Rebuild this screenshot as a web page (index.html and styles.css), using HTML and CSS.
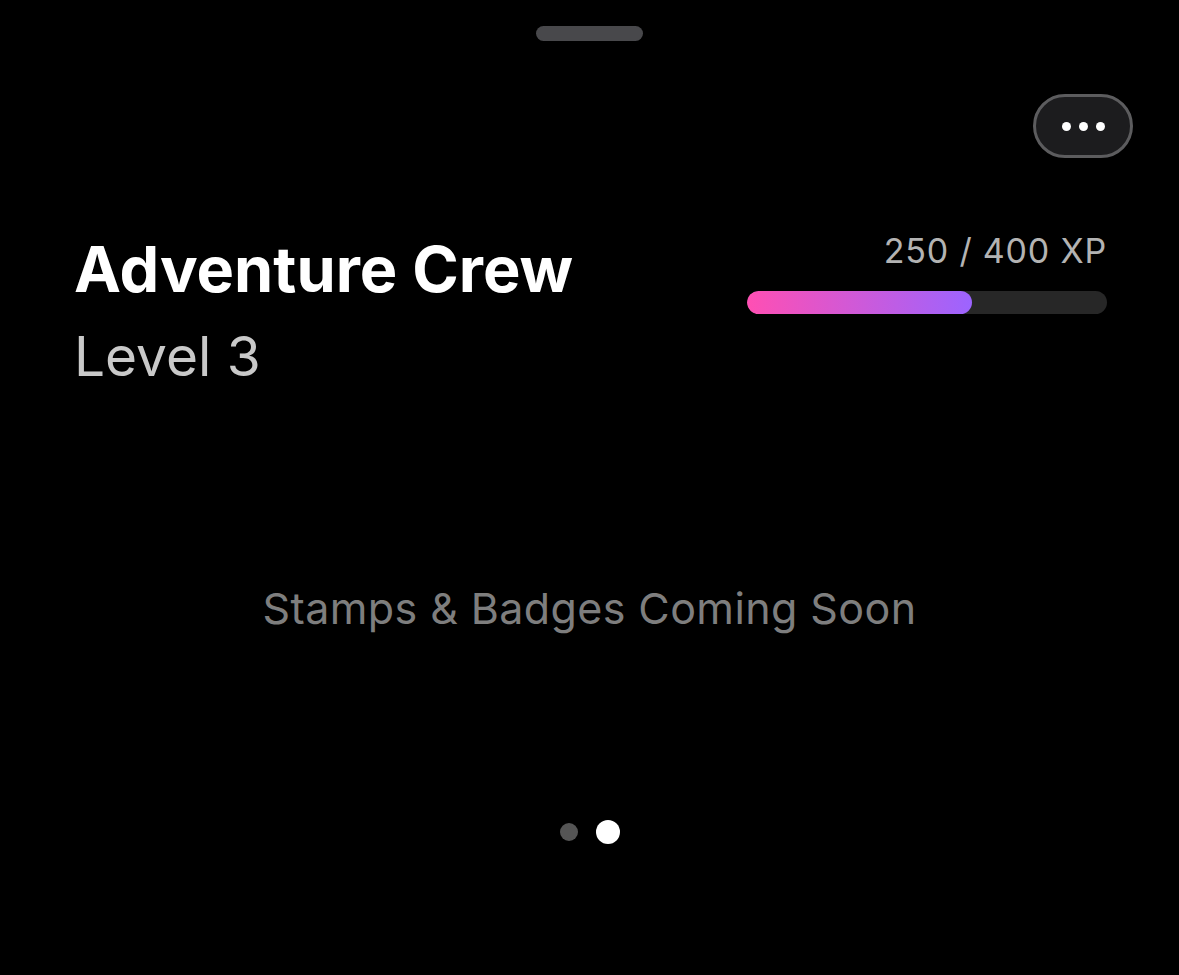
FILE: index.html
```html
<!DOCTYPE html>
<html lang="en">
<head>
    <meta charset="UTF-8">
    <meta name="viewport" content="width=device-width, initial-scale=1.0">
    <title>Adventure Crew</title>
    <link rel="stylesheet" href="styles.css">
</head>
<body>
    <div class="sheet">
        <div class="handle"></div>

        <div class="topbar">
            <button class="menu-btn" aria-label="More">
                <span class="dot"></span>
                <span class="dot"></span>
                <span class="dot"></span>
            </button>
        </div>

        <section class="crew-header">
            <div class="crew-info">
                <h1>Adventure Crew</h1>
                <p class="level">Level 3</p>
            </div>
            <div class="xp-block">
                <p class="xp-label">250 / 400 XP</p>
                <div class="xp-bar">
                    <span class="xp-fill" style="width: 62.5%;"></span>
                </div>
            </div>
        </section>

        <p class="coming-soon">Stamps &amp; Badges Coming Soon</p>

        <div class="pager">
            <span class="pager-dot"></span>
            <span class="pager-dot active"></span>
        </div>
    </div>
</body>
</html>
```

FILE: styles.css
```css
/* General */
body {
    margin: 0;
    padding: 0;
    background-color: #000;
    color: #fff;
    font-family: 'Inter', 'Liberation Sans', sans-serif;
}

.sheet {
    display: flex;
    flex-direction: column;
    min-height: 975px;
}

.handle {
    width: 107px;
    height: 15px;
    border-radius: 8px;
    background-color: #48484b;
    margin: 26px auto 0;
}

/* Menu button */
.topbar {
    display: flex;
    justify-content: flex-end;
    padding: 53px 46px 0 0;
}

.menu-btn {
    width: 100px;
    height: 64px;
    box-sizing: border-box;
    border: 3px solid #5c5c5e;
    border-radius: 32px;
    background-color: #1c1c1e;
    display: flex;
    align-items: center;
    justify-content: center;
    gap: 8px;
    padding: 0;
    cursor: pointer;
}

.menu-btn .dot {
    width: 9px;
    height: 9px;
    border-radius: 50%;
    background-color: #fff;
}

/* Header */
.crew-header {
    display: flex;
    justify-content: space-between;
    align-items: flex-start;
    padding: 73px 72px 0 74px;
}

.crew-info h1 {
    margin: 1px 0 0;
    font-size: 63px;
    font-weight: 700;
    line-height: 1.2;
    letter-spacing: 0;
    color: #fff;
}

.crew-info .level {
    margin: 15px 0 0;
    font-size: 55px;
    font-weight: 400;
    line-height: 1.2;
    color: #c9c9c9;
}

.xp-block {
    width: 360px;
    text-align: right;
}

.xp-label {
    margin: 0;
    font-size: 34px;
    line-height: 1.2;
    color: #b3b3b3;
    letter-spacing: 0.8px;
}

.xp-bar {
    margin-top: 19px;
    height: 23px;
    border-radius: 12px;
    background-color: #272727;
    overflow: hidden;
}

.xp-fill {
    display: block;
    height: 100%;
    border-radius: 12px;
    background: linear-gradient(90deg, #ff4fb3, #9c64ff);
}

/* Placeholder */
.coming-soon {
    margin: 194px 0 0;
    text-align: center;
    font-size: 43px;
    line-height: 1.2;
    letter-spacing: 0.4px;
    color: #7e7e7e;
}

/* Pager */
.pager {
    display: flex;
    justify-content: center;
    align-items: center;
    gap: 18px;
    margin-top: 186px;
}

.pager-dot {
    width: 18px;
    height: 18px;
    border-radius: 50%;
    background-color: #555;
}

.pager-dot.active {
    width: 24px;
    height: 24px;
    background-color: #fff;
}
```
